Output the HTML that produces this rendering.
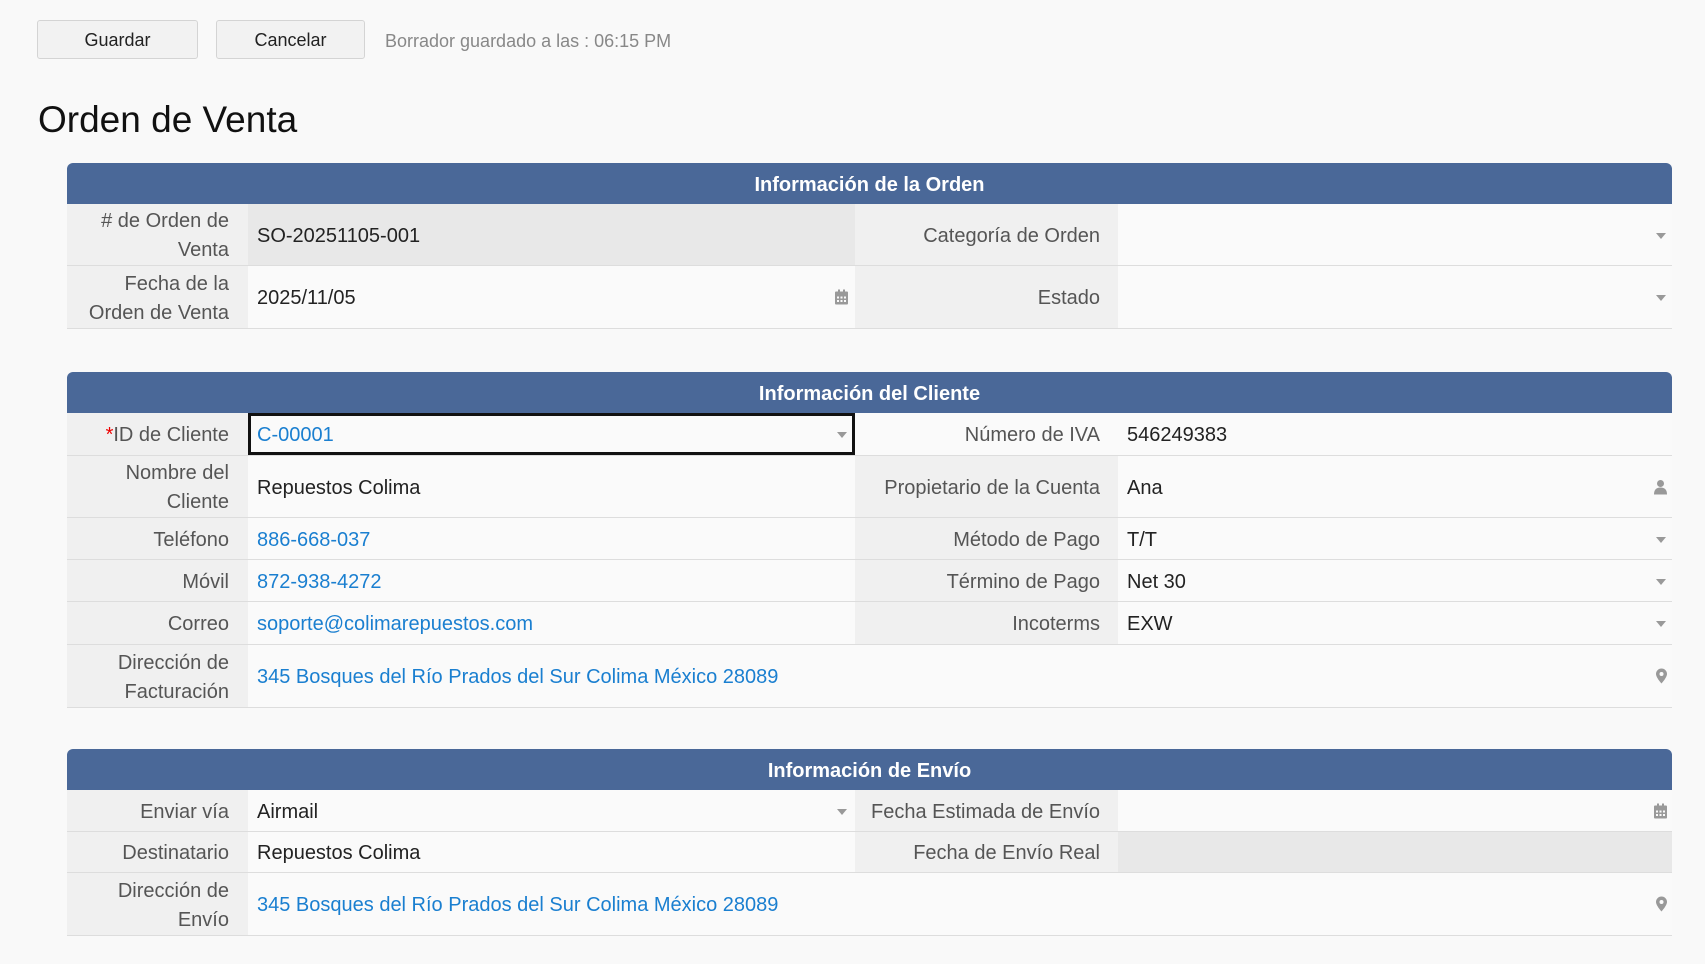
<!DOCTYPE html>
<html><head><meta charset="utf-8"><style>
*{box-sizing:border-box;margin:0;padding:0}
body{width:1705px;height:964px;background:#f9f9f9;font-family:"Liberation Sans",sans-serif;color:#222;position:relative;overflow:hidden}
.btn{position:absolute;top:20px;height:39px;border:1px solid #d4d4d4;border-radius:3px;background:#f2f2f2;font-size:18px;text-align:center;line-height:39px;color:#222}
.draft{position:absolute;left:385px;top:31px;font-size:18px;color:#888}
h1{position:absolute;left:38px;top:99px;font-size:37px;font-weight:normal;color:#111}
.sec{position:absolute;left:67px;width:1605px}
.hd{height:41px;background:#4a6898;color:#fff;font-weight:bold;font-size:20px;text-align:center;line-height:44px;border-radius:6px 6px 0 0}
.row{display:flex;border-bottom:1px solid #ddd}
.l{width:181px;background:#f0f0f0;text-align:right;padding-right:19px;padding-top:3px;font-size:20px;color:#555;display:flex;align-items:center;justify-content:flex-end;line-height:29px}
.v{width:607px;background:#fafafa;padding-left:9px;padding-top:3px;font-size:20px;display:flex;align-items:center;position:relative}
.l2{width:263px;background:#f0f0f0;text-align:right;padding-right:18px;padding-top:3px;font-size:20px;color:#555;display:flex;align-items:center;justify-content:flex-end}
.v2{flex:1;background:#fafafa;padding-left:9px;padding-top:3px;font-size:20px;display:flex;align-items:center;position:relative}
.wide{flex:1}
.ro{background:#e8e8e8}
a{color:#1a7fd0;text-decoration:none}
.ic{position:absolute;right:5px;top:50%;transform:translateY(-50%)}
.v .ic{right:7px}
.car{position:absolute;right:6px;top:50%;margin-top:-2px;width:0;height:0;border-left:5px solid transparent;border-right:5px solid transparent;border-top:6px solid #999}
.v .car{right:8px}
.star{color:#e00}
.focus{outline:3px solid #111;outline-offset:-3px}
</style></head><body>
<div class="btn" style="left:37px;width:161px">Guardar</div>
<div class="btn" style="left:216px;width:149px">Cancelar</div>
<div class="draft">Borrador guardado a las : 06:15 PM</div>
<h1>Orden de Venta</h1>

<div class="sec" style="top:163px">
<div class="hd">Información de la Orden</div>
<div class="row" style="height:62px"><div class="l">#&nbsp;de Orden de<br>Venta</div><div class="v ro">SO-20251105-001</div><div class="l2">Categoría de Orden</div><div class="v2"><span class="car"></span></div></div>
<div class="row" style="height:63px"><div class="l">Fecha de la<br>Orden de Venta</div><div class="v">2025/11/05<svg class="ic" width="13" height="15" viewBox="0 0 13 15"><rect x="0" y="2" width="13" height="13" rx="1" fill="#999"/><rect x="3" y="0" width="2" height="4" fill="#999"/><rect x="8" y="0" width="2" height="4" fill="#999"/><g fill="#fafafa"><rect x="2" y="7" width="2" height="2"/><rect x="5.5" y="7" width="2" height="2"/><rect x="9" y="7" width="2" height="2"/><rect x="2" y="10.5" width="2" height="2"/><rect x="5.5" y="10.5" width="2" height="2"/><rect x="9" y="10.5" width="2" height="2"/></g></svg></div><div class="l2">Estado</div><div class="v2"><span class="car"></span></div></div>
</div>

<div class="sec" style="top:372px">
<div class="hd">Información del Cliente</div>
<div class="row" style="height:43px"><div class="l"><span class="star">*</span>ID de Cliente</div><div class="v focus"><a>C-00001</a><span class="car"></span></div><div class="l2" style="background:#fafafa">Número de IVA</div><div class="v2">546249383</div></div>
<div class="row" style="height:62px"><div class="l">Nombre del<br>Cliente</div><div class="v">Repuestos Colima</div><div class="l2">Propietario de la Cuenta</div><div class="v2">Ana<svg class="ic" width="13" height="15" viewBox="0 0 13 15"><circle cx="6.5" cy="4" r="3.5" fill="#999"/><path d="M0 15 Q0 8 6.5 8 Q13 8 13 15Z" fill="#999"/></svg></div></div>
<div class="row" style="height:42px"><div class="l">Teléfono</div><div class="v"><a>886-668-037</a></div><div class="l2">Método de Pago</div><div class="v2">T/T<span class="car"></span></div></div>
<div class="row" style="height:42px"><div class="l">Móvil</div><div class="v"><a>872-938-4272</a></div><div class="l2">Término de Pago</div><div class="v2">Net 30<span class="car"></span></div></div>
<div class="row" style="height:43px"><div class="l">Correo</div><div class="v"><a>soporte@colimarepuestos.com</a></div><div class="l2">Incoterms</div><div class="v2">EXW<span class="car"></span></div></div>
<div class="row" style="height:63px"><div class="l">Dirección de<br>Facturación</div><div class="v2 wide"><a>345 Bosques del Río Prados del Sur Colima México 28089</a><svg class="ic" width="11" height="15" viewBox="0 0 11 15"><path d="M5.5 0A5.5 5.5 0 0 0 0 5.5C0 9 5.5 15 5.5 15S11 9 11 5.5A5.5 5.5 0 0 0 5.5 0Z" fill="#999"/><circle cx="5.5" cy="5.5" r="2" fill="#fafafa"/></svg></div></div>
</div>

<div class="sec" style="top:749px">
<div class="hd">Información de Envío</div>
<div class="row" style="height:42px"><div class="l">Enviar vía</div><div class="v">Airmail<span class="car"></span></div><div class="l2">Fecha Estimada de Envío</div><div class="v2"><svg class="ic" width="13" height="15" viewBox="0 0 13 15"><rect x="0" y="2" width="13" height="13" rx="1" fill="#999"/><rect x="3" y="0" width="2" height="4" fill="#999"/><rect x="8" y="0" width="2" height="4" fill="#999"/><g fill="#fafafa"><rect x="2" y="7" width="2" height="2"/><rect x="5.5" y="7" width="2" height="2"/><rect x="9" y="7" width="2" height="2"/><rect x="2" y="10.5" width="2" height="2"/><rect x="5.5" y="10.5" width="2" height="2"/><rect x="9" y="10.5" width="2" height="2"/></g></svg></div></div>
<div class="row" style="height:41px"><div class="l">Destinatario</div><div class="v">Repuestos Colima</div><div class="l2">Fecha de Envío Real</div><div class="v2 ro"></div></div>
<div class="row" style="height:63px"><div class="l">Dirección de<br>Envío</div><div class="v2 wide"><a>345 Bosques del Río Prados del Sur Colima México 28089</a><svg class="ic" width="11" height="15" viewBox="0 0 11 15"><path d="M5.5 0A5.5 5.5 0 0 0 0 5.5C0 9 5.5 15 5.5 15S11 9 11 5.5A5.5 5.5 0 0 0 5.5 0Z" fill="#999"/><circle cx="5.5" cy="5.5" r="2" fill="#fafafa"/></svg></div></div>
</div>
</body></html>
